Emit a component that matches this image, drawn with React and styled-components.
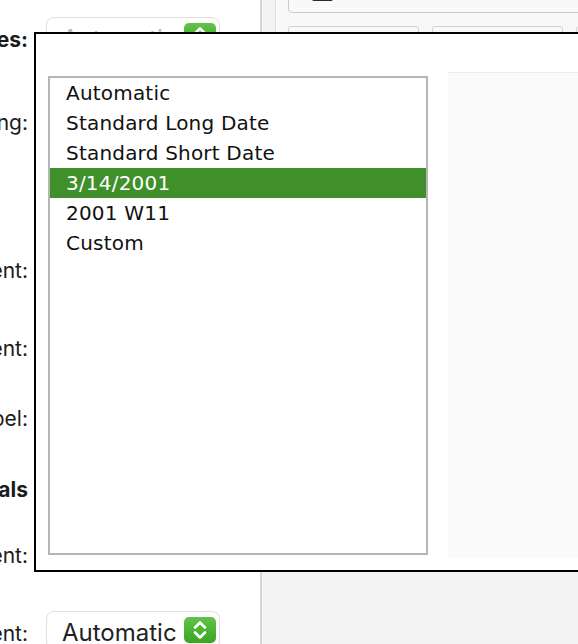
import styled, { createGlobalStyle } from 'styled-components';

const GlobalStyle = createGlobalStyle`
	html, body {
		margin: 0;
		padding: 0;
		overflow: hidden;
		background: #ffffff;
	}
	#root {
		width: 578px;
		height: 644px;
	}
`;

const ROWS = [
	{ label: 'Date Styles:', bold: true, select: 'Automatic', muted: true, gap: 17 },
	{ label: 'Formatting:', select: 'Automatic', gap: 45 },
	{ label: 'Alignment:', select: 'Automatic', gap: 110 },
	{ label: 'Indent:', select: 'Automatic', gap: 40 },
	{ label: 'Label:', select: 'Automatic', gap: 32 },
	{ label: 'Totals', bold: true, gap: 33 },
	{ label: 'Alignment:', select: 'Automatic', gap: 28 },
	{ label: 'Placement:', select: 'Automatic', gap: 40 },
];

const FORMATS = [
	'Automatic',
	'Standard Long Date',
	'Standard Short Date',
	'3/14/2001',
	'2001 W11',
	'Custom',
];

const Page = styled.div`
	position: relative;
	display: flex;
	width: 578px;
	height: 644px;
	overflow: hidden;
`;

const LeftPane = styled.div`
	width: 260px;
	flex-shrink: 0;
	display: flex;
	flex-direction: column;
	background: #ffffff;
`;

const Row = styled.div`
	display: flex;
	align-items: center;
	gap: 18px;
	height: 38px;
	flex-shrink: 0;
	margin-top: ${(p) => p.$gap}px;
`;

const LabelBox = styled.div`
	width: 28px;
	flex-shrink: 0;
	display: flex;
	justify-content: flex-end;
	padding-top: 6px;
`;

const Label = styled.span`
	white-space: nowrap;
	font-family: Inter, 'Noto Sans', sans-serif;
	font-size: 21px;
	font-weight: ${(p) => (p.$bold ? 700 : 400)};
	color: #1c1c1c;
`;

const SelectBox = styled.div`
	width: 174px;
	height: 38px;
	box-sizing: border-box;
	border: 1px solid #dedede;
	border-radius: 8px;
	background: #ffffff;
	display: flex;
	align-items: center;
	justify-content: space-between;
	padding: 0 3px 0 15px;
	box-shadow: 0 1px 1px rgba(0, 0, 0, 0.04);
`;

const SelectText = styled.span`
	font-family: Inter, 'Noto Sans', sans-serif;
	font-size: 24px;
	padding-top: 4px;
	color: ${(p) => (p.$muted ? '#b8b8b8' : '#222222')};
	white-space: nowrap;
`;

const Stepper = styled.div`
	width: 32px;
	height: 26px;
	border-radius: 5px;
	background: linear-gradient(#62c24a, #3aa61f);
	display: flex;
	align-items: center;
	justify-content: center;
`;

const Divider = styled.div`
	width: 2px;
	flex-shrink: 0;
	background: #d6d6d6;
`;

const RightPane = styled.div`
	flex: 1;
	background: #f3f3f3;
	padding-left: 13px;
`;

const Inspector = styled.div`
	height: 520px;
	border-left: 1px solid #e0e0e0;
	background: #f8f8f8;
	padding-left: 12px;
`;

const TopBox = styled.div`
	height: 33px;
	margin-top: -20px;
	box-sizing: border-box;
	border: 1px solid #c9c9c9;
	border-radius: 4px;
	background: #f9f9f9;
	display: flex;
	align-items: flex-end;
	padding: 0 0 11px 23px;
	gap: 12px;
`;

const TopIcon = styled.div`
	width: 21px;
	height: 12px;
	border-radius: 2px;
	background: #2a2a2a;
`;

const TopText = styled.span`
	font-family: Inter, sans-serif;
	font-size: 14px;
	color: #bdbdbd;
	line-height: 12px;
`;

const Tabs = styled.div`
	display: flex;
	gap: 13px;
	margin-top: 13px;
`;

const Tab = styled.div`
	width: 129px;
	height: 40px;
	flex-shrink: 0;
	border: 1px solid #d2d2d2;
	border-radius: 3px;
	background: #f8f8f8;
`;

const Popup = styled.div`
	position: absolute;
	left: 34px;
	top: 32px;
	width: 620px;
	height: 540px;
	box-sizing: border-box;
	border: 2px solid #000000;
	background: #ffffff;
	display: flex;
	align-items: flex-start;
	gap: 20px;
	padding: 38px 0 0 12px;
`;

const ListBox = styled.div`
	width: 380px;
	height: 479px;
	margin-top: 4px;
	box-sizing: border-box;
	border: 2px solid #b5b5b5;
	background: #ffffff;
	display: flex;
	flex-direction: column;
	flex-shrink: 0;
`;

const Option = styled.div`
	height: 30px;
	display: flex;
	align-items: center;
	padding-left: 16px;
	font-family: 'DejaVu Sans', Verdana, sans-serif;
	font-size: 20px;
	letter-spacing: 0.2px;
	color: ${(p) => (p.$selected ? '#ffffff' : '#111111')};
	background: ${(p) => (p.$selected ? '#3f902b' : 'transparent')};
`;

const Preview = styled.div`
	width: 140px;
	height: 486px;
	flex-shrink: 0;
	box-sizing: border-box;
	border-top: 1px solid #ededed;
	background: #fafafa;
`;

const Chevrons = () => (
	<svg width="16" height="22" viewBox="0 0 16 22" fill="none">
		<path
			d="M3 8.5 L8 3.5 L13 8.5"
			stroke="#ffffff"
			strokeWidth="2.6"
			strokeLinecap="round"
			strokeLinejoin="round"
		/>
		<path
			d="M3 13.5 L8 18.5 L13 13.5"
			stroke="#ffffff"
			strokeWidth="2.6"
			strokeLinecap="round"
			strokeLinejoin="round"
		/>
	</svg>
);

export default function App() {
	return (
		<Page>
			<GlobalStyle />
			<LeftPane>
				{ROWS.map((row, i) => (
					<Row key={i} $gap={row.gap}>
						<LabelBox>
							<Label $bold={row.bold}>{row.label}</Label>
						</LabelBox>
						{row.select && (
							<SelectBox>
								<SelectText $muted={row.muted}>
									{row.select}
								</SelectText>
								<Stepper>
									<Chevrons />
								</Stepper>
							</SelectBox>
						)}
					</Row>
				))}
			</LeftPane>
			<Divider />
			<RightPane>
				<Inspector>
					<TopBox>
						<TopIcon />
						<TopText>Date Format</TopText>
					</TopBox>
					<Tabs>
						<Tab />
						<Tab />
						<Tab />
					</Tabs>
				</Inspector>
			</RightPane>
			<Popup>
				<ListBox>
					{FORMATS.map((f) => (
						<Option key={f} $selected={f === '3/14/2001'}>
							{f}
						</Option>
					))}
				</ListBox>
				<Preview />
			</Popup>
		</Page>
	);
}
